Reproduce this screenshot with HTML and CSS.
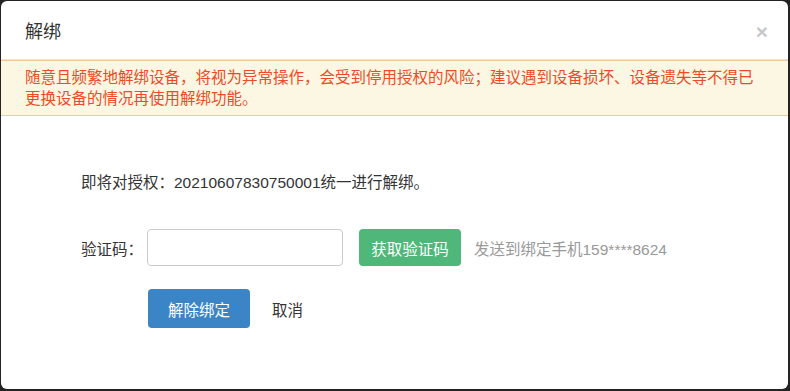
FILE: index.html
```html
<!DOCTYPE html>
<html lang="zh-CN">
<head>
    <meta charset="UTF-8">
    <meta name="viewport" content="width=device-width, initial-scale=1.0">
    <title>解绑</title>
    <link rel="stylesheet" href="styles.css">
</head>
<body>
    <div class="modal">
        <div class="modal-header">
            <h4 class="modal-title">解绑</h4>
            <button class="close" type="button">&times;</button>
        </div>
        <div class="warning">
            随意且频繁地解绑设备，将视为异常操作，会受到停用授权的风险；建议遇到设备损坏、设备遗失等不得已更换设备的情况再使用解绑功能。
        </div>
        <div class="modal-body">
            <p class="notice">即将对授权：20210607830750001统一进行解绑。</p>
            <div class="form-row">
                <label class="label" for="code">验证码：</label>
                <input type="text" id="code" class="input">
                <button class="btn btn-green" type="button">获取验证码</button>
                <span class="hint">发送到绑定手机159****8624</span>
            </div>
            <div class="actions">
                <button class="btn btn-blue" type="button">解除绑定</button>
                <button class="btn-link" type="button">取消</button>
            </div>
        </div>
    </div>
</body>
</html>
```

FILE: styles.css
```css
html, body {
    margin: 0;
    height: 100%;
}
body {
    background-color: #232323;
    font-family: "Liberation Sans", "Noto Sans CJK SC", sans-serif;
    color: #333;
    padding: 1px 2px 0 1px;
    box-sizing: border-box;
}
.modal {
    background-color: #fff;
    height: 388px;
    border-radius: 6px;
    overflow: hidden;
}
.modal-header {
    display: flex;
    align-items: center;
    justify-content: space-between;
    height: 58px;
    padding: 0 20px 0 24px;
    border-bottom: 1px solid #e5e5e5;
}
.modal-title {
    margin: 0;
    font-size: 18px;
    font-weight: normal;
    color: #333;
}
.close {
    border: none;
    background: none;
    padding: 0;
    font-family: "Liberation Sans", sans-serif;
    font-size: 21px;
    font-weight: bold;
    color: #c8c8c8;
    cursor: pointer;
    line-height: 1;
    margin-top: 2px;
}
.warning {
    background-color: #fcf7e3;
    border-top: 1px solid #f2c98f;
    border-bottom: 1px solid #f2c98f;
    color: #ef4a26;
    font-size: 15.5px;
    line-height: 21px;
    padding: 6px 30px 6px 24px;
}
.modal-body {
    padding: 56px 0 0 80px;
    font-size: 15.5px;
}
.notice {
    margin: 0;
    line-height: 21px;
}
.form-row {
    display: flex;
    align-items: center;
    margin-top: 36px;
}
.label {
    width: 66px;
}
.input {
    width: 196px;
    height: 37px;
    box-sizing: border-box;
    border: 1px solid #ccc;
    border-radius: 4px;
    margin-right: 16px;
}
.btn {
    border: none;
    border-radius: 4px;
    color: #fff;
    font-family: inherit;
    font-size: 15.5px;
    width: 102px;
    cursor: pointer;
}
.btn-green {
    background-color: #50b77a;
    height: 37px;
}
.hint {
    color: #999;
    margin-left: 13px;
}
.actions {
    display: flex;
    align-items: center;
    margin: 23px 0 0 67px;
}
.btn-blue {
    background-color: #3b85c6;
    height: 39px;
}
.btn-link {
    border: none;
    background: none;
    font-family: inherit;
    font-size: 15.5px;
    color: #333;
    margin-left: 14px;
    padding: 0 8px;
    cursor: pointer;
}
```
